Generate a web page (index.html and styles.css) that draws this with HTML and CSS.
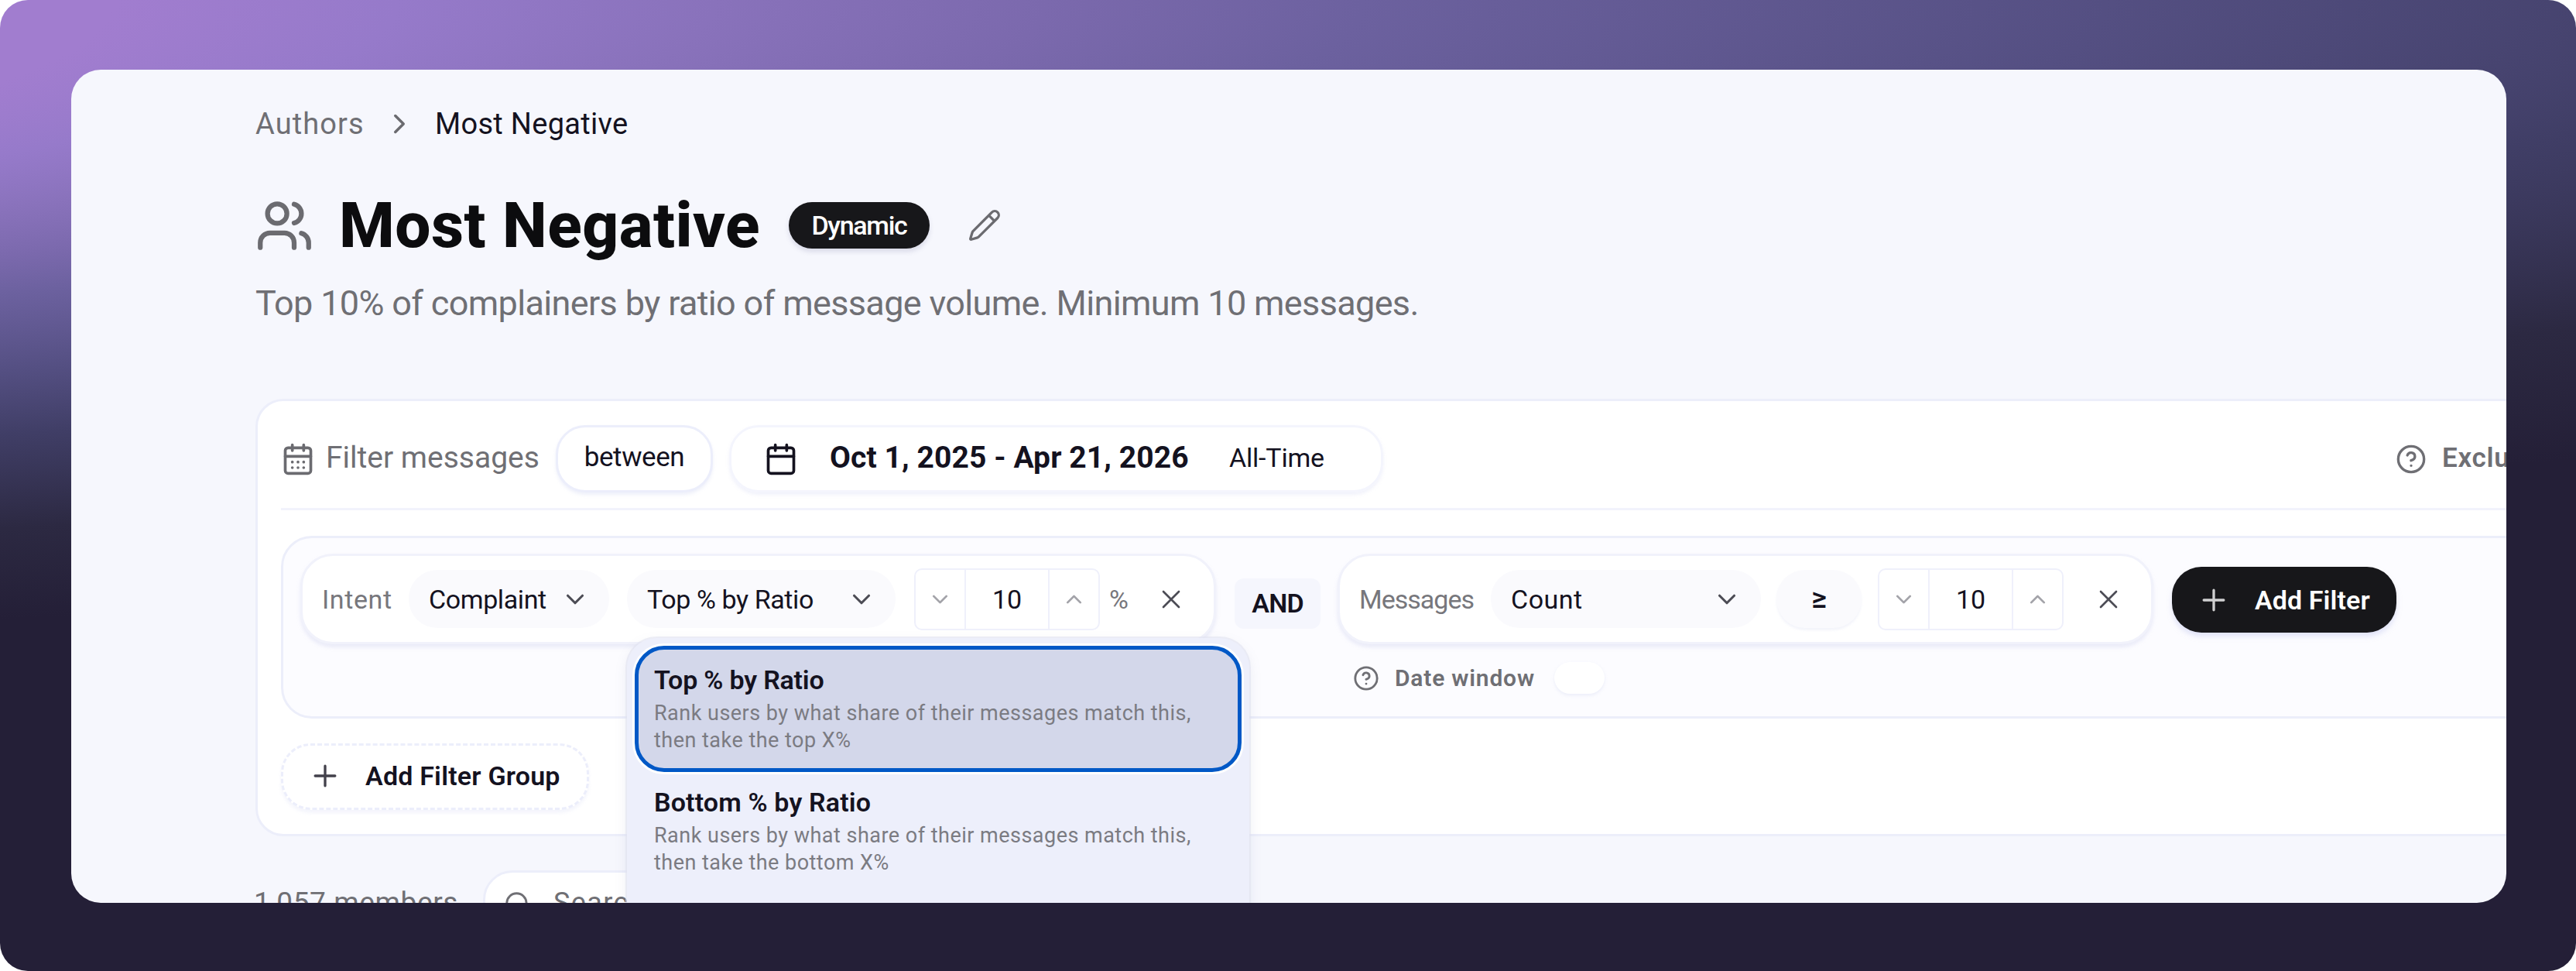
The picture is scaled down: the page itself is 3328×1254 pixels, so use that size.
FILE: index.html
```html
<!DOCTYPE html>
<html lang="en">
<head>
  <meta charset="UTF-8">
  <title>Most Negative</title>
  <link rel="stylesheet" href="styles.css">
</head>
<body>

  <!-- shared icons -->
  <svg class="sprite" width="0" height="0">
    <symbol id="chevron-down" viewBox="0 0 24 24"><path d="m6 9 6 6 6-6"/></symbol>
    <symbol id="chevron-up" viewBox="0 0 24 24"><path d="m18 15-6-6-6 6"/></symbol>
    <symbol id="close" viewBox="0 0 24 24"><path d="M18 6 6 18M6 6l12 12"/></symbol>
    <symbol id="plus" viewBox="0 0 24 24"><path d="M5 12h14M12 5v14"/></symbol>
    <symbol id="help" viewBox="0 0 24 24"><circle cx="12" cy="12" r="10"/><path d="M9.09 9a3 3 0 0 1 5.83 1c0 2-3 3-3 3M12 17h.01"/></symbol>
  </svg>

  <div class="frame">
    <div class="window">

      <nav class="breadcrumb">
        <span class="muted">Authors</span>
        <svg class="icon crumb-arrow" viewBox="0 0 24 24"><path d="m9 18 6-6-6-6"/></svg>
        <span class="current">Most Negative</span>
      </nav>

      <header class="title-row">
        <svg class="icon users-icon" viewBox="0 0 24 24"><path d="M16 21v-2a4 4 0 0 0-4-4H6a4 4 0 0 0-4 4v2"/><circle cx="9" cy="7" r="4"/><path d="M22 21v-2a4 4 0 0 0-3-3.87M16 3.13a4 4 0 0 1 0 7.75"/></svg>
        <h1>Most Negative</h1>
        <span class="badge">Dynamic</span>
        <svg class="icon edit-icon" viewBox="0 0 24 24"><path d="M21.17 6.81a1 1 0 0 0-3.99-3.99L3.84 16.17a2 2 0 0 0-.5.83l-1.32 4.35a.5.5 0 0 0 .62.62l4.35-1.32a2 2 0 0 0 .83-.5zM15 5l4 4"/></svg>
      </header>

      <p class="subtitle">Top 10% of complainers by ratio of message volume. Minimum 10 messages.</p>

      <section class="filters">
        <div class="date-row">
          <svg class="icon cal-icon" viewBox="0 0 24 24"><path d="M8 2v4M16 2v4M3 10h18M8 14h.01M12 14h.01M16 14h.01M8 18h.01M12 18h.01M16 18h.01"/><rect x="3" y="4" width="18" height="18" rx="2"/></svg>
          <span class="filter-label">Filter messages</span>
          <button class="between">between</button>
          <div class="date-range">
            <svg class="icon cal-icon dark" viewBox="0 0 24 24"><path d="M8 2v4M16 2v4M3 10h18"/><rect x="3" y="4" width="18" height="18" rx="2"/></svg>
            <span class="dates">Oct 1, 2025 - Apr 21, 2026</span>
            <span class="all-time">All-Time</span>
          </div>
          <div class="exclude">
            <svg class="icon help-icon"><use href="#help"/></svg>
            <span>Exclude</span>
          </div>
        </div>

        <div class="group">
          <div class="chip chip-intent">
            <span class="chip-label intent">Intent</span>
            <div class="select complaint">
              <span>Complaint</span>
              <svg class="icon arrow"><use href="#chevron-down"/></svg>
            </div>
            <div class="select metric">
              <span>Top % by Ratio</span>
              <svg class="icon arrow"><use href="#chevron-down"/></svg>
              <div class="menu">
                <div class="option selected">
                  <div class="option-title">Top % by Ratio</div>
                  <div class="option-text">Rank users by what share of their messages match this,<br>then take the top X%</div>
                </div>
                <div class="option">
                  <div class="option-title wide">Bottom % by Ratio</div>
                  <div class="option-text">Rank users by what share of their messages match this,<br>then take the bottom X%</div>
                </div>
              </div>
            </div>
            <div class="stepper">
              <svg class="icon step"><use href="#chevron-down"/></svg>
              <span class="value">10</span>
              <svg class="icon step"><use href="#chevron-up"/></svg>
            </div>
            <span class="percent">%</span>
            <svg class="icon close"><use href="#close"/></svg>
          </div>

          <span class="and">AND</span>

          <div class="messages-col">
            <div class="chip chip-messages">
              <span class="chip-label messages">Messages</span>
              <div class="select count">
                <span>Count</span>
                <svg class="icon arrow"><use href="#chevron-down"/></svg>
              </div>
              <div class="operator">≥</div>
              <div class="stepper">
                <svg class="icon step"><use href="#chevron-down"/></svg>
                <span class="value">10</span>
                <svg class="icon step"><use href="#chevron-up"/></svg>
              </div>
              <svg class="icon close"><use href="#close"/></svg>
            </div>
            <div class="date-window">
              <svg class="icon help-small"><use href="#help"/></svg>
              <span>Date window</span>
              <i class="toggle"></i>
            </div>
          </div>

          <button class="add-filter">
            <svg class="icon plus"><use href="#plus"/></svg>
            <span>Add Filter</span>
          </button>
        </div>

        <button class="add-group">
          <svg class="icon plus"><use href="#plus"/></svg>
          <span>Add Filter Group</span>
        </button>
      </section>

      <div class="members-row">
        <span class="members">1,057 members</span>
        <div class="search">
          <svg class="icon search-icon" viewBox="0 0 24 24"><circle cx="11" cy="11" r="8"/><path d="m21 21-4.3-4.3"/></svg>
          <span>Search</span>
        </div>
      </div>

    </div>
  </div>

</body>
</html>
```

FILE: styles.css
```css
* {
  box-sizing: border-box;
}

body {
  margin: 0;
  background: #fff;
  font-family: Roboto, "Liberation Sans", sans-serif;
  color: #14121f;
}

button {
  font-family: inherit;
  color: inherit;
  padding: 0;
}

.sprite {
  display: block;
}

.icon {
  flex: none;
  fill: none;
  stroke: currentColor;
  stroke-width: 2;
  stroke-linecap: round;
  stroke-linejoin: round;
}

.muted {
  color: #6f6f74;
}

.frame {
  width: 3328px;
  height: 1254px;
  padding: 90px 90px 88px 92px;
  border-radius: 36px;
  background: radial-gradient(20436px 1081px at -13750px 0, #a17dcf 68%, #967aca 69.8%, #8972bb 71.8%, #7b69ad 73.9%, #6c619f 75.9%, #544f82 80.6%, #403e66 85%, #2c2942 92.3%, #241f37 100%);
}

.window {
  height: 1076px;
  padding: 46px 0 0 238px;
  border-radius: 38px;
  background: #f6f7fd;
  overflow: hidden;
  white-space: nowrap;
}

/* header */
.breadcrumb {
  display: flex;
  align-items: center;
  height: 48px;
  font-size: 38px;
}

.breadcrumb .muted {
  width: 165px;
  letter-spacing: 1.1px;
}

.breadcrumb .current {
  letter-spacing: 0.3px;
}

.crumb-arrow {
  width: 42px;
  height: 42px;
  margin-right: 25px;
  color: #6b6b70;
}

.title-row {
  display: flex;
  align-items: center;
  height: 96px;
  margin-top: 59px;
}

.users-icon {
  width: 75px;
  height: 75px;
  color: #6b6b70;
}

h1 {
  width: 581px;
  margin: 0 0 0 33px;
  font-size: 82px;
  line-height: 96px;
  font-weight: 800;
  letter-spacing: 0.5px;
  color: #0c0c0e;
}

.badge {
  width: 182px;
  height: 60px;
  border-radius: 30px;
  background: #17171a;
  color: #fff;
  font-size: 34px;
  font-weight: 500;
  line-height: 60px;
  letter-spacing: -1.3px;
  text-align: center;
  box-shadow: 0 4px 6px rgba(90, 90, 140, 0.18);
}

.edit-icon {
  width: 44px;
  height: 44px;
  margin-left: 49px;
  stroke-width: 1.8;
  color: #6b6b70;
}

.subtitle {
  margin: 23px 0 0;
  font-size: 45px;
  line-height: 60px;
  letter-spacing: -0.65px;
  color: #6f6f74;
}

/* filter card */
.filters {
  width: 3100px;
  height: 565px;
  margin-top: 93px;
  padding: 31px 30px 30px;
  border: 3px solid #eceefa;
  border-radius: 36px;
  background: #fff;
}

.date-row {
  display: flex;
  align-items: center;
  height: 110px;
  padding-bottom: 20px;
  border-bottom: 3px solid #f2f3fc;
}

.cal-icon {
  width: 44px;
  height: 44px;
  color: #6b6b70;
}

.cal-icon.dark {
  color: #14121f;
}

.filter-label {
  width: 297px;
  margin: -4px 0 0 14px;
  font-size: 39px;
  letter-spacing: 0;
  color: #6f6f74;
}

.between {
  width: 203px;
  height: 87px;
  border: 3px solid #eceefb;
  border-radius: 38px;
  background: #fff;
  font-size: 35px;
  line-height: 77px;
  padding-bottom: 4px;
  letter-spacing: -0.4px;
  box-shadow: 0 3px 4px rgba(200, 204, 240, 0.3);
}

.date-range {
  display: flex;
  align-items: center;
  width: 845px;
  height: 87px;
  margin-left: 21px;
  padding-left: 42px;
  border: 3px solid #f4f5fd;
  border-radius: 38px;
  box-shadow: 0 3px 4px rgba(200, 204, 240, 0.25);
}

.dates {
  width: 516px;
  margin: -4px 0 0 41px;
  font-size: 39px;
  font-weight: 700;
  letter-spacing: 0.1px;
}

.all-time {
  margin-top: -3px;
  font-size: 34px;
  letter-spacing: -0.2px;
}

.exclude {
  display: flex;
  align-items: center;
  margin-left: 1308px;
  font-size: 35px;
  font-weight: 600;
  letter-spacing: 0.7px;
  color: #6f6f74;
}

.exclude span {
  margin-top: -3px;
}

.help-icon {
  width: 40px;
  height: 40px;
  margin-right: 20px;
}

.group {
  display: flex;
  align-items: flex-start;
  height: 236px;
  margin-top: 33px;
  padding: 20px 22px;
  border: 3px solid #eceefa;
  border-radius: 40px;
  background: #fcfcff;
}

.chip {
  display: flex;
  align-items: center;
  height: 117px;
  padding-left: 25px;
  border: 3px solid #f1f2fb;
  border-radius: 42px;
  background: #fff;
  font-size: 34px;
  box-shadow: 0 4px 5px rgba(200, 204, 235, 0.35);
}

.chip-intent {
  width: 1183px;
}

.chip-messages {
  width: 1054px;
}

.chip-label {
  color: #77777c;
}

.intent {
  width: 112px;
  letter-spacing: 0.6px;
}

.messages {
  width: 170px;
  letter-spacing: -1px;
}

.select {
  display: flex;
  align-items: center;
  justify-content: space-between;
  height: 75px;
  padding: 0 26px;
  border-radius: 37px;
  background: #fafafd;
}

.arrow {
  width: 38px;
  height: 38px;
  margin-right: -1px;
  color: #4c4c55;
}

.complaint {
  width: 259px;
  letter-spacing: -0.4px;
}

.metric {
  position: relative;
  width: 347px;
  margin: 0 24px 0 23px;
  letter-spacing: -0.4px;
}

.count {
  width: 349px;
  letter-spacing: 0.5px;
}

.operator {
  width: 110px;
  height: 75px;
  margin: 0 21px 0 20px;
  border-radius: 37px;
  background: #fafafd;
  font-size: 38px;
  font-weight: 600;
  line-height: 73px;
  text-align: center;
  box-shadow: 0 3px 3px rgba(200, 204, 235, 0.2);
}

.stepper {
  display: flex;
  width: 240px;
  height: 80px;
  border: 2px solid #eff0fb;
  border-radius: 10px;
}

.step {
  width: 63px;
  height: 76px;
  padding: 0 15px;
  color: #a3a3a9;
}

.value {
  width: 110px;
  border: solid #eff0fb;
  border-width: 0 2px;
  line-height: 76px;
  text-align: center;
}

.percent {
  width: 25px;
  margin: 0 35px 0 12px;
  font-size: 34px;
  letter-spacing: -1px;
  color: #77777c;
}

.close {
  width: 40px;
  height: 40px;
  stroke-width: 1.6;
  color: #4c4c55;
}

.chip-messages .close {
  margin-left: 38px;
}

.and {
  width: 111px;
  height: 65px;
  margin: 32px 22px 0 24px;
  border-radius: 12px;
  background: #f5f6fd;
  font-size: 34px;
  font-weight: 600;
  line-height: 65px;
  letter-spacing: -0.8px;
  text-align: center;
}

.date-window {
  display: flex;
  align-items: center;
  height: 41px;
  margin: 23px 0 0 20px;
  font-size: 30px;
  font-weight: 600;
  letter-spacing: 0.8px;
  color: #6f6f74;
}

.date-window span {
  width: 206px;
}

.help-small {
  width: 34px;
  height: 34px;
  margin-right: 20px;
}

.toggle {
  width: 65px;
  height: 41px;
  border-radius: 21px;
  background: #fff;
  box-shadow: 0 2px 4px rgba(200, 204, 235, 0.3);
}

.add-filter {
  display: flex;
  align-items: center;
  width: 290px;
  height: 85px;
  margin: 17px 0 0 24px;
  padding-left: 32px;
  border: 0;
  border-radius: 38px;
  background: #17171a;
  color: #fff;
  font-size: 34px;
  font-weight: 600;
  letter-spacing: 0.1px;
  box-shadow: 0 5px 6px rgba(200, 204, 240, 0.5);
}

.plus {
  width: 44px;
  height: 44px;
  margin-right: 31px;
  stroke-width: 1.8;
  opacity: 0.8;
}

.add-group {
  display: flex;
  align-items: center;
  width: 398px;
  height: 86px;
  margin-top: 32px;
  padding: 0 0 2px 32px;
  border: 3px dashed #eceefb;
  border-radius: 38px;
  background: #fff;
  font-size: 34px;
  font-weight: 600;
  letter-spacing: 0.2px;
  box-shadow: 0 4px 4px rgba(200, 204, 240, 0.2);
}

.add-group .plus {
  margin-right: 30px;
}

/* metric dropdown */
.menu {
  position: absolute;
  z-index: 2;
  top: 88px;
  left: 0;
  width: 804px;
  height: 420px;
  padding: 10px;
  border-radius: 38px;
  background: #edeffb;
  box-shadow: 0 0 0 2px rgba(225, 227, 240, 0.6), 0 6px 16px rgba(120, 125, 170, 0.15);
}

.option {
  height: 163px;
  margin-top: -5px;
  padding: 17px 20px;
  border: 5px solid transparent;
  border-radius: 38px;
}

.option.selected {
  margin-top: 0;
  border-color: #0058c6;
  background: #d3d7ea;
  box-shadow: 0 0 0 3px #fff;
}

.option-title {
  line-height: 44px;
  font-weight: 600;
  letter-spacing: -0.2px;
}

.option-title.wide {
  letter-spacing: 0.15px;
}

.option-text {
  margin-top: 4px;
  font-size: 27px;
  line-height: 34.5px;
  letter-spacing: 0.48px;
  color: #7b7b82;
}

/* members */
.members-row {
  display: flex;
  align-items: center;
  height: 87px;
  margin-top: 44px;
  color: #6f6f74;
}

.members {
  width: 296px;
  margin-top: -5px;
  margin-left: -2px;
  font-size: 37px;
  letter-spacing: 0.6px;
}

.search {
  display: flex;
  align-items: center;
  width: 700px;
  height: 87px;
  padding-left: 23px;
  border: 3px solid #eceefa;
  border-radius: 38px;
  background: #fff;
  font-size: 36px;
  letter-spacing: 1.4px;
}

.search-icon {
  width: 38px;
  height: 38px;
  margin-right: 27px;
  stroke-width: 1.8;
}

.search span {
  margin-top: -3px;
}
```
